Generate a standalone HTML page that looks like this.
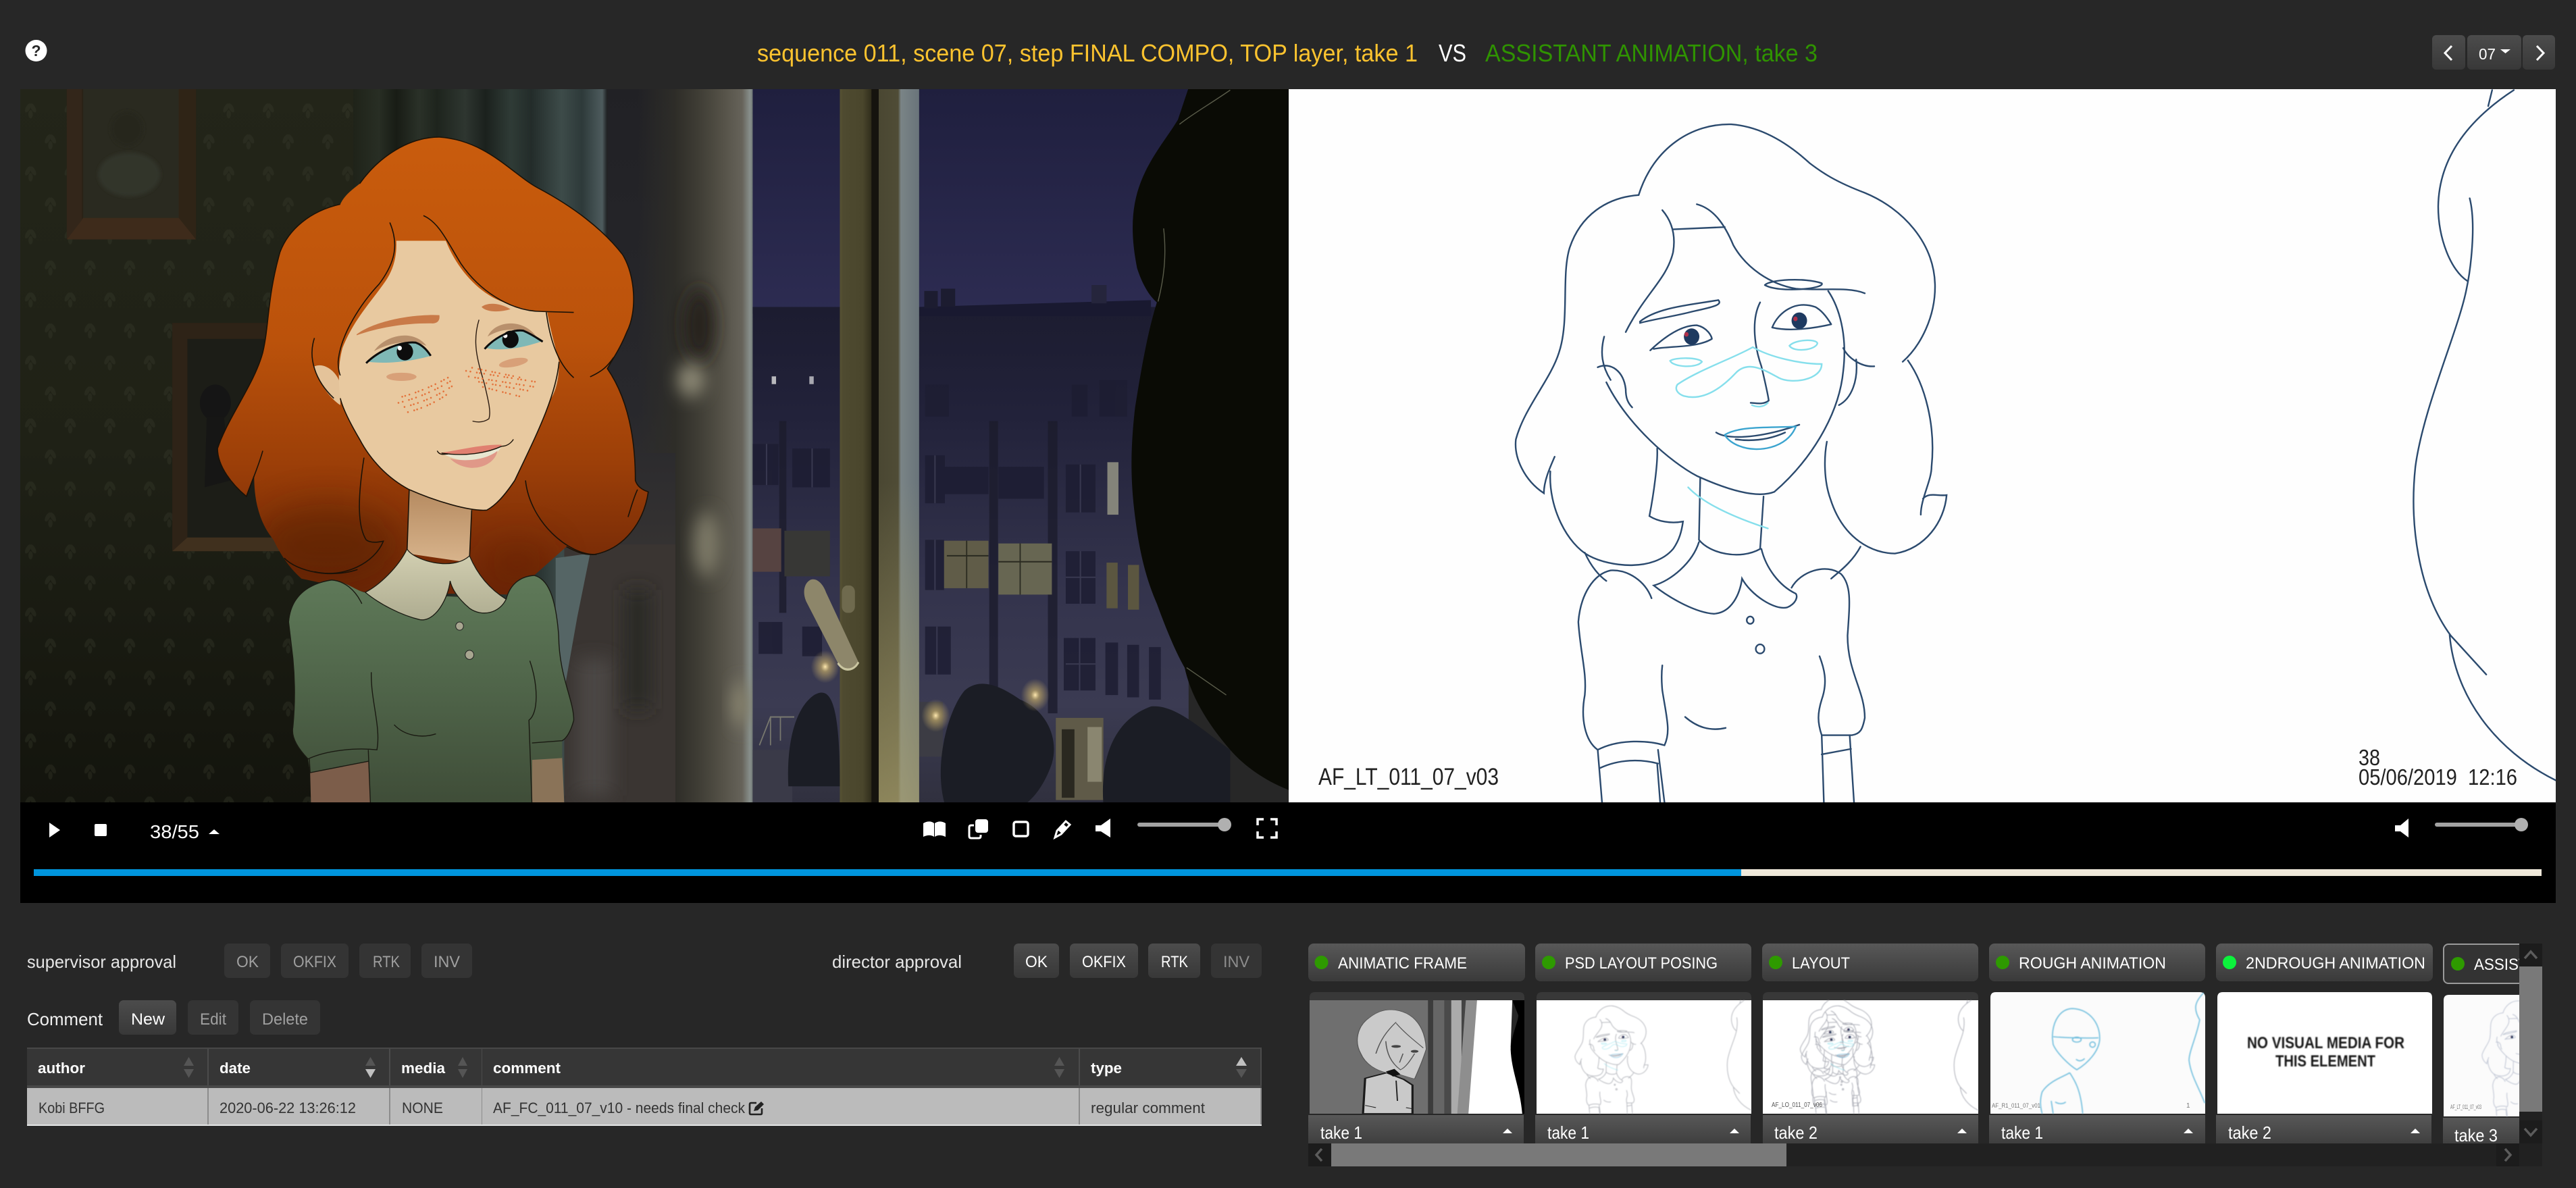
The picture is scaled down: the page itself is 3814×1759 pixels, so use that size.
<!DOCTYPE html>
<html lang="en">
<head>
<meta charset="utf-8">
<title>Compare takes</title>
<style>
html,body{margin:0;padding:0;background:#272727;width:3814px;height:1759px;overflow:hidden}
svg{display:block}
text{font-family:"Liberation Sans",Arial,sans-serif}
.n,.n *{vector-effect:non-scaling-stroke}
</style>
</head>
<body>
<svg xmlns="http://www.w3.org/2000/svg" width="3814" height="1759" viewBox="0 0 3814 1759">
<defs>
<linearGradient id="btn" x1="0" y1="0" x2="0" y2="1"><stop offset="0" stop-color="#4c4c4c"/><stop offset="1" stop-color="#383838"/></linearGradient>
<linearGradient id="tab" x1="0" y1="0" x2="0" y2="1"><stop offset="0" stop-color="#585858"/><stop offset="1" stop-color="#3a3a3a"/></linearGradient>
<linearGradient id="wall" x1="0" y1="0" x2="0" y2="1"><stop offset="0" stop-color="#232519"/><stop offset=".5" stop-color="#1f2116"/><stop offset="1" stop-color="#13140d"/></linearGradient>
<linearGradient id="curt" x1="0" y1="0" x2="1" y2="0">
<stop offset="0" stop-color="#1f2319"/><stop offset=".1" stop-color="#282e24"/><stop offset=".17" stop-color="#181c15"/><stop offset=".26" stop-color="#2a3128"/><stop offset=".33" stop-color="#1e241d"/><stop offset=".44" stop-color="#2e3630"/><stop offset=".52" stop-color="#1b211d"/><stop offset=".62" stop-color="#2f3b36"/><stop offset=".7" stop-color="#232c2a"/><stop offset=".82" stop-color="#3d4b49"/><stop offset=".9" stop-color="#2e3a3a"/><stop offset=".98" stop-color="#4d5b5d"/><stop offset="1" stop-color="#1d1e20"/></linearGradient>
<linearGradient id="curt2" x1="0" y1="0" x2="0" y2="1"><stop offset="0" stop-color="#212125"/><stop offset=".45" stop-color="#28282c"/><stop offset=".75" stop-color="#3c3835"/><stop offset="1" stop-color="#4a4541"/></linearGradient>
<linearGradient id="curt2b" x1="0" y1="0" x2="1" y2="0"><stop offset="0" stop-color="#2e2d28" stop-opacity="0"/><stop offset="1" stop-color="#2e2d28"/></linearGradient>
<linearGradient id="curt3" x1="0" y1="0" x2="1" y2="0"><stop offset="0" stop-color="#2e2d28"/><stop offset=".3" stop-color="#3f3d35"/><stop offset=".6" stop-color="#545147"/><stop offset=".86" stop-color="#66635a"/><stop offset=".96" stop-color="#88908c"/><stop offset="1" stop-color="#6e7674"/></linearGradient>
<linearGradient id="hair" x1="0" y1="108" x2="0" y2="1100" gradientUnits="userSpaceOnUse"><stop offset="0" stop-color="#c95c0d"/><stop offset=".45" stop-color="#bb520b"/><stop offset=".72" stop-color="#9c3f08"/><stop offset="1" stop-color="#6e2606"/></linearGradient>
<linearGradient id="dress" x1="0" y1="1070" x2="0" y2="1568" gradientUnits="userSpaceOnUse"><stop offset="0" stop-color="#5f7a59"/><stop offset=".5" stop-color="#4f6449"/><stop offset="1" stop-color="#3f4d38"/></linearGradient>
<linearGradient id="neck" x1="0" y1="880" x2="0" y2="1040" gradientUnits="userSpaceOnUse"><stop offset="0" stop-color="#b58a60"/><stop offset="1" stop-color="#d8b48c"/></linearGradient>
<linearGradient id="collar" x1="0" y1="1010" x2="0" y2="1165" gradientUnits="userSpaceOnUse"><stop offset="0" stop-color="#d3d0b2"/><stop offset="1" stop-color="#aeac90"/></linearGradient>
<linearGradient id="sky" x1="0" y1="0" x2="0" y2="1"><stop offset="0" stop-color="#1f1f3e"/><stop offset="1" stop-color="#2d2c52"/></linearGradient>
<linearGradient id="bld" x1="0" y1="0" x2="0" y2="1"><stop offset="0" stop-color="#1c1c30"/><stop offset=".22" stop-color="#22223a"/><stop offset=".55" stop-color="#33334c"/><stop offset=".8" stop-color="#3b3b52"/><stop offset="1" stop-color="#30303e"/></linearGradient>
<linearGradient id="fr1" x1="0" y1="0" x2="1" y2="0"><stop offset="0" stop-color="#575233"/><stop offset=".1" stop-color="#4e4a30"/><stop offset=".7" stop-color="#4a462c"/><stop offset=".95" stop-color="#33301d"/><stop offset="1" stop-color="#171510"/></linearGradient>
<linearGradient id="fr2" x1="0" y1="0" x2="1" y2="0"><stop offset="0" stop-color="#4a4732"/><stop offset=".48" stop-color="#4f4c36"/><stop offset=".55" stop-color="#7a8486"/><stop offset="1" stop-color="#69747a"/></linearGradient>
<linearGradient id="fr2b" x1="0" y1="0" x2="0" y2="1"><stop offset="0" stop-color="#000" stop-opacity="0"/><stop offset=".55" stop-color="#a89f6c" stop-opacity="0"/><stop offset="1" stop-color="#a89f6c" stop-opacity=".7"/></linearGradient>
<radialGradient id="lamp"><stop offset="0" stop-color="#ffe9b0"/><stop offset=".3" stop-color="#c0a868" stop-opacity=".7"/><stop offset="1" stop-color="#c0a868" stop-opacity="0"/></radialGradient>
<filter id="b4" x="-30%" y="-30%" width="160%" height="160%"><feGaussianBlur stdDeviation="4"/></filter>
<filter id="b20" x="-50%" y="-50%" width="200%" height="200%"><feGaussianBlur stdDeviation="20"/></filter>
<filter id="b40" x="-80%" y="-80%" width="260%" height="260%"><feGaussianBlur stdDeviation="40"/></filter>
<filter id="b1" x="-5%" y="-5%" width="110%" height="110%"><feGaussianBlur stdDeviation=".7"/></filter>
<pattern id="leaf" width="92" height="138" patternUnits="userSpaceOnUse" patternTransform="translate(45,20)">
<g fill="#3a3c2e" opacity=".32"><ellipse cx="20" cy="24" rx="5" ry="11" transform="rotate(30 20 24)"/><ellipse cx="32" cy="24" rx="5" ry="11" transform="rotate(-30 32 24)"/><ellipse cx="26" cy="38" rx="5" ry="9"/><ellipse cx="66" cy="92" rx="5" ry="11" transform="rotate(30 66 92)"/><ellipse cx="78" cy="92" rx="5" ry="11" transform="rotate(-30 78 92)"/><ellipse cx="72" cy="106" rx="5" ry="9"/></g>
</pattern>
<clipPath id="cL"><rect x="30" y="132" width="1878" height="1056"/></clipPath>
<clipPath id="cR"><rect x="1908" y="132" width="1876" height="1056"/></clipPath>
<clipPath id="cT"><rect x="1930" y="1380" width="1800" height="313"/></clipPath>
<clipPath id="cHead"><rect x="1908" y="0" width="1100" height="1300"/></clipPath>
<clipPath id="cHair"><path d="M1020 108C1130 115 1190 190 1250 220C1330 260 1400 310 1445 365C1475 410 1480 490 1455 535C1440 570 1425 590 1410 615C1450 670 1475 750 1475 860C1480 875 1495 882 1505 885C1495 950 1450 1010 1380 1022C1355 1024 1335 1015 1315 1005L1190 1110L850 1105L700 1075C670 1050 650 1020 635 990C600 950 590 900 590 850L572 895C540 870 505 830 505 790C530 720 590 650 610 580C625 520 620 460 650 360C670 310 720 270 790 255C800 235 815 225 835 210C880 150 950 108 1020 108Z"/></clipPath>

<g id="sk0" class="n" fill="none" stroke-linecap="round">
 <g transform="translate(1900,130) scale(.63776,.67602)">
  <path d="M825 235C860 130 950 78 1040 80C1110 85 1170 120 1222 165C1250 185 1280 205 1350 230C1440 265 1510 340 1513 430C1515 500 1480 565 1438 600"/>
  <path d="M1450 597C1490 650 1515 740 1505 830C1505 860 1480 900 1480 935M1485 900C1500 885 1520 895 1540 892C1535 950 1490 1010 1420 1020C1370 1020 1300 990 1270 900C1255 860 1255 810 1262 775"/>
  <path d="M825 235C750 240 690 280 665 350C645 410 665 510 640 580C620 640 560 700 540 770C535 810 560 860 605 888C605 860 620 830 630 808"/>
  <path d="M620 840C615 920 660 1000 710 1025C760 1050 860 1060 905 1010C920 990 925 970 928 950C900 955 870 950 850 938C860 890 870 820 868 790"/>
  <path d="M880 268C900 290 912 320 905 360C890 420 840 450 795 535M905 310L1025 305M960 255C1000 265 1025 300 1045 345C1075 395 1130 430 1190 440C1250 445 1310 435 1350 450"/>
  <path d="M1118 432C1130 420 1210 415 1250 428C1260 440 1150 450 1118 432"/>
  <path d="M1265 445C1290 480 1310 540 1300 620C1290 720 1220 820 1140 885C1100 900 1030 880 960 850C900 820 800 740 750 645"/>
  <path d="M730 612C760 600 790 620 795 660C795 680 800 690 810 700M745 545C735 580 740 610 760 640M1330 595C1335 640 1320 680 1290 695M1300 570C1310 590 1340 612 1372 610"/>
  <path d="M828 512C870 480 950 475 1010 465C1020 475 1000 480 950 490C910 500 870 505 828 515"/>
  <path d="M852 575C880 550 920 520 960 520C985 525 995 545 995 550M860 572C900 565 960 570 995 550"/>
  <circle cx="948" cy="545" r="18" fill="#1e3a60" stroke="none"/><circle cx="936" cy="540" r="5" fill="#b0304a" stroke="none"/>
  <path d="M1135 525C1150 490 1190 465 1235 480C1255 490 1270 515 1272 518M1135 525C1180 535 1240 525 1272 518"/>
  <circle cx="1198" cy="510" r="18" fill="#1e3a60" stroke="none"/><circle cx="1189" cy="506" r="5" fill="#b0304a" stroke="none"/>
  <path d="M1107 470C1085 510 1095 570 1110 610C1120 650 1125 670 1127 685C1115 695 1095 690 1085 690"/>
  <path d="M1005 755C1030 770 1100 770 1198 738M1050 770C1090 775 1130 770 1165 755"/>
  <path d="M968 855L965 990M1115 895L1107 1010M965 990C990 1020 1060 1035 1107 1010"/>
  <path d="M965 995C950 1040 900 1080 860 1090C900 1120 960 1150 1000 1152C1040 1150 1060 1110 1065 1075C1085 1110 1140 1145 1170 1138C1190 1130 1195 1115 1190 1108C1150 1090 1120 1050 1110 1010"/>
  <path d="M855 1118C840 1080 800 1055 760 1057C720 1065 690 1110 685 1170C690 1240 705 1280 700 1330C690 1380 700 1430 730 1450C780 1425 850 1430 885 1440C900 1410 890 1380 880 1320C878 1300 878 1280 880 1265"/>
  <path d="M1180 1095C1200 1060 1260 1040 1295 1065C1320 1090 1315 1130 1310 1200C1310 1280 1350 1320 1350 1380C1345 1405 1340 1415 1320 1418L1250 1418C1240 1390 1240 1370 1250 1340C1265 1300 1255 1270 1245 1245"/>
  <path d="M730 1450L740 1565M735 1490C780 1470 830 1470 870 1480M870 1450L885 1565M868 1480L875 1565M1250 1418L1255 1565M1315 1418L1325 1565M1250 1460L1318 1448"/>
  <path d="M933 1378C960 1400 990 1410 1027 1402"/>
  <circle cx="1084" cy="1166" r="8"/><circle cx="1107" cy="1229" r="10"/>
  <path d="M700 1018C715 1050 735 1070 750 1080M1340 1005C1320 1040 1290 1060 1272 1075"/>
 </g>
 <g transform="translate(2900,130) scale(.58291,.67602)">
  <path d="M1355 5L1345 40M1410 5C1330 50 1220 130 1218 260C1218 330 1250 400 1292 423M1298 242C1315 300 1300 400 1290 440C1270 530 1180 700 1160 830C1145 950 1165 1100 1250 1200L1340 1285M1247 1198C1260 1330 1360 1450 1517 1517"/>
 </g>
</g>
<g id="skb" class="n" fill="none" stroke-linecap="round" transform="translate(1900,130) scale(.63776,.67602)">
  <g stroke="#86dfec">
   <path d="M898 598C910 590 965 590 972 600C960 615 905 612 898 598M1175 565C1190 550 1240 550 1240 560C1235 575 1185 580 1175 565"/>
   <path d="M915 650C960 620 1050 590 1090 568C1130 590 1200 605 1250 605C1250 640 1180 650 1150 635C1120 620 1080 595 1050 625C1010 665 970 685 930 675C915 670 908 660 915 650"/>
   <path d="M1088 695C1100 700 1115 700 1125 690M940 875C980 915 1060 945 1125 965"/>
  </g>
  <g stroke="#3ba4cf"><path d="M1025 760C1060 740 1130 745 1190 742C1170 790 1100 800 1060 785C1045 780 1030 770 1025 760"/></g>
</g>
</defs>

<rect width="3814" height="1759" fill="#272727"/>

<!-- header -->
<circle cx="53.5" cy="75" r="16" fill="#fff"/>
<text x="53.5" y="83" font-size="23" font-weight="700" fill="#272727" text-anchor="middle">?</text>
<text x="1121" y="91" font-size="36" fill="#fcc32f" textLength="978" lengthAdjust="spacingAndGlyphs">sequence 011, scene 07, step FINAL COMPO, TOP layer, take 1</text>
<text x="2130" y="91" font-size="36" fill="#fff" textLength="41" lengthAdjust="spacingAndGlyphs">VS</text>
<text x="2199" y="91" font-size="36" fill="#2f9300" textLength="492" lengthAdjust="spacingAndGlyphs">ASSISTANT ANIMATION, take 3</text>
<rect x="3601" y="52" width="49" height="51" rx="6" fill="url(#btn)"/>
<rect x="3653" y="52" width="80" height="51" rx="6" fill="url(#btn)"/>
<rect x="3735" y="52" width="48" height="51" rx="6" fill="url(#btn)"/>
<path d="M3630 68L3620 78.5L3630 89" fill="none" stroke="#fff" stroke-width="3"/>
<path d="M3756 68L3766 78.5L3756 89" fill="none" stroke="#fff" stroke-width="3"/>
<text x="3670" y="88" font-size="23" fill="#fff" textLength="25" lengthAdjust="spacingAndGlyphs">07</text>
<path d="M3702 73H3717L3709.5 79Z" fill="#fff"/>

<!-- left video frame -->
<g clip-path="url(#cL)">
 <g transform="translate(0,130) scale(.63776,.67602)">
  <rect x="40" y="0" width="1540" height="1570" fill="url(#wall)"/>
  <rect x="40" y="0" width="800" height="1570" fill="url(#leaf)"/>
  <!-- frames -->
  <rect x="155" y="0" width="300" height="332" fill="#2a2216"/>
  <rect x="193" y="0" width="224" height="285" fill="#2a2a20"/>
  <path d="M155 332L193 285H417L455 332Z" fill="#3e2b1b"/>
  <path d="M155 0H190V290L155 332Z" fill="#33261a"/><path d="M415 0H455V332L415 285Z" fill="#2f2416"/>
  <ellipse cx="300" cy="190" rx="72" ry="48" fill="#33342a" filter="url(#b4)"/><circle cx="295" cy="90" r="38" fill="#25271d" filter="url(#b4)"/>
  <rect x="400" y="515" width="260" height="500" fill="#2e2317"/>
  <rect x="435" y="550" width="225" height="435" fill="#1c1d17"/>
  <path d="M400 1015L435 985H660V1015Z" fill="#40301e"/>
  <ellipse cx="500" cy="690" rx="36" ry="40" fill="#151515"/><path d="M480 720H520L535 860L475 875Z" fill="#161615"/>
  <!-- curtain -->
  <rect x="820" y="0" width="590" height="1570" fill="url(#curt)"/>
  <rect x="1410" y="0" width="170" height="1570" fill="url(#curt2)"/>
  <rect x="1480" y="0" width="90" height="800" fill="url(#curt2b)"/>
  <rect x="1310" y="1000" width="270" height="570" fill="#3a3532"/>
  <rect x="1340" y="1250" width="80" height="300" fill="#4c4744" filter="url(#b20)"/>
  <rect x="1450" y="1100" width="60" height="260" fill="#2c2926" filter="url(#b20)"/>
  <path d="M1290 1030L1370 1020L1340 1160L1310 1320L1290 1300Z" fill="#556565"/>
  <!-- hair -->
  <path d="M1020 108C1130 115 1190 190 1250 220C1330 260 1400 310 1445 365C1475 410 1480 490 1455 535C1440 570 1425 590 1410 615C1450 670 1475 750 1475 860C1480 875 1495 882 1505 885C1495 950 1450 1010 1380 1022C1355 1024 1335 1015 1315 1005L1190 1110L850 1105L700 1075C670 1050 650 1020 635 990C600 950 590 900 590 850L572 895C540 870 505 830 505 790C530 720 590 650 610 580C625 520 620 460 650 360C670 310 720 270 790 255C800 235 815 225 835 210C880 150 950 108 1020 108Z" fill="url(#hair)"/>
  <g clip-path="url(#cHair)">
   <ellipse cx="760" cy="1000" rx="170" ry="90" fill="#4a1a04" opacity=".45" filter="url(#b40)"/>
   <ellipse cx="1200" cy="1040" rx="90" ry="50" fill="#5a1f04" opacity=".4" filter="url(#b40)"/>
  </g>
  <!-- ear -->
  <path d="M730 610C755 600 785 625 790 650L790 695C765 680 735 640 730 610Z" fill="#e4c39a"/>
  <path d="M1270 610L1298 600C1298 640 1290 670 1272 690Z" fill="#d8b48a"/>
  <!-- neck -->
  <path d="M950 870L1095 920L1090 1040L945 1020Z" fill="url(#neck)"/>
  <!-- face -->
  <path d="M920 335L1035 335C1060 395 1110 450 1170 470C1210 485 1245 490 1270 490C1280 540 1290 570 1298 600C1290 680 1240 770 1195 860C1170 895 1150 915 1130 925C1090 928 1010 905 950 880C900 855 860 815 835 770C810 730 795 700 790 680C785 640 785 605 795 570C820 510 860 470 890 430C910 405 922 375 920 335Z" fill="#e8c9a0"/>
  <g fill="none" stroke="#1a1208" stroke-width="1.6" class="n">
   <path d="M1020 108C1130 115 1190 190 1250 220C1330 260 1400 310 1445 365C1475 410 1480 490 1455 535C1440 570 1425 590 1410 615C1450 670 1475 750 1475 860C1480 875 1495 882 1505 885C1495 950 1450 1010 1380 1022C1355 1024 1335 1015 1315 1005"/>
   <path d="M835 210C880 150 950 108 1020 108M790 255C720 270 670 310 650 360C620 460 625 520 610 580C590 650 530 720 505 790C505 830 540 870 572 895L590 850M660 1030C690 1060 770 1075 830 1055"/>
   <path d="M905 295C925 340 920 380 880 430C840 470 790 540 785 600C785 620 790 630 790 630M983 280C1020 295 1040 340 1070 385C1110 440 1180 490 1260 490L1332 492M1268 490C1275 540 1290 600 1332 635M1370 633C1400 620 1410 610 1425 590M730 548C715 590 730 640 775 680M610 795C600 830 585 860 572 895M845 810C830 900 830 960 850 990C860 998 880 995 890 993C870 1040 800 1075 730 1060M1220 860C1230 950 1320 1025 1385 1022M1480 880C1470 900 1465 920 1458 940"/>
   <path d="M1298 600C1290 680 1240 770 1195 860C1170 895 1150 915 1130 925C1090 928 1010 905 950 880C900 855 860 815 835 770C810 730 795 700 790 680M950 880L945 1015M1095 925L1090 1030"/>
  </g>
  <!-- facial features -->
  <path d="M828 540C870 510 960 495 1020 498C1022 510 1015 516 1005 516C940 515 880 525 828 542Z" fill="#c97a48"/>
  <path d="M1118 480C1130 470 1160 470 1185 485C1160 492 1130 492 1118 480Z" fill="#c97a48"/>
  <path d="M868 577C895 540 960 528 990 565C950 550 905 558 868 577Z" fill="#b8906c"/>
  <path d="M1132 545C1150 508 1215 505 1245 545C1205 525 1165 525 1132 545Z" fill="#b8906c"/>
  <path d="M855 600C890 570 930 556 965 558C985 565 995 578 1000 587C960 598 900 606 855 600Z" fill="#7fb8b6"/>
  <path d="M1128 570C1150 545 1190 530 1215 532C1235 540 1250 550 1258 555C1220 568 1170 578 1128 570Z" fill="#7fb8b6"/>
  <circle cx="940" cy="578" r="19" fill="#0d0d0d"/><circle cx="928" cy="570" r="5" fill="#fff"/>
  <circle cx="1185" cy="551" r="19" fill="#0d0d0d"/><circle cx="1173" cy="543" r="5" fill="#fff"/>
  <g fill="none" stroke="#0d0d0d" class="n">
   <path d="M850 603C880 575 930 555 965 558C985 565 995 580 1000 587" stroke-width="3"/>
   <path d="M1125 572C1150 545 1190 528 1215 532C1235 540 1250 550 1260 556" stroke-width="3"/>
   <path d="M1112 508C1095 560 1110 600 1125 650C1135 690 1140 710 1135 725C1120 735 1105 732 1097 730" stroke-width="1.4" stroke="#2a1a10"/>
  </g>
  <ellipse cx="932" cy="633" rx="35" ry="9" fill="#d8a078"/>
  <ellipse cx="1192" cy="602" rx="34" ry="9" fill="#d8a078" transform="rotate(-10 1192 602)"/>
  <g fill="none" stroke="#e4733c" stroke-width="4" stroke-linecap="round" stroke-dasharray=".1 10 .1 15 .1 7">
   <path d="M925 690Q990 675 1050 640"/><path d="M935 700Q1000 685 1052 652" stroke-dashoffset="6"/><path d="M920 680Q985 665 1045 632" stroke-dashoffset="11"/><path d="M940 712Q995 700 1040 670" stroke-dashoffset="3"/>
   <path d="M1082 620L1250 645"/><path d="M1085 632L1240 655" stroke-dashoffset="7"/><path d="M1100 642L1235 665" stroke-dashoffset="13"/><path d="M1090 612L1210 635" stroke-dashoffset="4"/><path d="M1120 655L1215 678" stroke-dashoffset="9"/>
  </g>
  <path d="M1020 800C1060 795 1120 780 1165 782C1150 800 1100 802 1060 802Z" fill="#e08070"/>
  <path d="M1025 800C1080 808 1130 800 1165 785C1150 810 1120 820 1090 818C1060 815 1040 808 1025 800Z" fill="#e8e6d0"/>
  <path d="M1045 812C1080 820 1130 815 1155 795C1150 820 1120 835 1090 832C1070 830 1055 822 1045 812Z" fill="#e09888"/>
  <path d="M1015 795C1020 805 1030 803 1040 802M1165 785C1175 785 1185 780 1192 770M1025 800C1080 808 1130 800 1165 785" fill="none" stroke="#1a1208" stroke-width="1.4" class="n"/>
  <!-- arms -->
  <path d="M720 1500L855 1470L860 1570H722Z" fill="#7c5d4a"/>
  <path d="M1235 1470L1305 1465L1310 1570H1235Z" fill="#8a7358"/>
  <!-- dress -->
  <path d="M670 1170C675 1110 720 1085 770 1078C800 1080 825 1100 845 1105L1175 1120C1185 1085 1210 1070 1240 1068C1270 1075 1290 1110 1297 1200C1298 1290 1332 1340 1332 1385C1325 1410 1315 1425 1305 1430L1305 1468L1235 1472L1235 1570L860 1570L855 1475L720 1500L715 1470C695 1450 675 1425 680 1400C685 1350 685 1300 680 1250Z" fill="url(#dress)"/>
  <path d="M670 1170C675 1110 720 1085 770 1078C800 1080 825 1100 840 1130M1175 1120C1185 1085 1210 1070 1240 1068C1270 1075 1290 1110 1297 1200C1298 1290 1332 1340 1332 1385C1325 1410 1315 1425 1305 1430L1235 1435M862 1280C860 1340 885 1400 875 1450C830 1445 760 1450 715 1470C695 1450 675 1425 680 1400C685 1350 685 1300 680 1250L670 1170M915 1395C940 1420 980 1425 1012 1415M1230 1255C1250 1310 1250 1370 1228 1385L1235 1570M718 1470L720 1500L855 1475M855 1450L860 1570" fill="none" stroke="#1a1a12" stroke-width="1.4" class="n"/>
  <!-- collar -->
  <path d="M945 1010C960 1035 1050 1060 1090 1025C1110 1070 1140 1100 1175 1120C1160 1150 1120 1160 1090 1140C1065 1120 1050 1100 1045 1080C1040 1120 1010 1170 975 1165C930 1155 880 1130 848 1105C880 1090 925 1050 945 1010Z" fill="url(#collar)" stroke="#1a1a12" stroke-width="1.3" class="n"/>
  <circle cx="1067" cy="1179" r="9" fill="#a8a690" stroke="#222" stroke-width="1" class="n"/>
  <circle cx="1090" cy="1242" r="10" fill="#a8a690" stroke="#222" stroke-width="1" class="n"/>
 </g>

 <!-- window part -->
 <g transform="translate(1000,130) scale(.58673,.67602)">
  <rect x="0" y="0" width="196" height="1570" fill="url(#curt3)"/>
  <ellipse cx="60" cy="520" rx="40" ry="80" fill="#25231f" filter="url(#b20)"/>
  <ellipse cx="40" cy="640" rx="36" ry="36" fill="#8d8976" filter="url(#b20)"/>
  <ellipse cx="80" cy="1000" rx="34" ry="70" fill="#7c7866" filter="url(#b20)"/>
  <ellipse cx="165" cy="1350" rx="24" ry="50" fill="#86826d" filter="url(#b20)"/>
  <rect x="195" y="0" width="1100" height="495" fill="url(#sky)"/>
  <rect x="195" y="480" width="1100" height="1090" fill="url(#bld)"/>
  <path d="M615 480L1200 465V500H615Z" fill="#191930"/>
  <rect x="628" y="445" width="34" height="38" fill="#1c1c30"/><rect x="670" y="440" width="36" height="40" fill="#1c1c30"/><rect x="1050" y="432" width="38" height="40" fill="#25253c"/>
  <rect x="243" y="632" width="11" height="17" fill="#b8b8bc"/><rect x="338" y="632" width="11" height="17" fill="#a8a8b0"/>
  <g fill="#1d1d32" opacity=".85">
   <rect x="195" y="780" width="65" height="90"/><rect x="295" y="790" width="95" height="85"/>
   <rect x="630" y="805" width="50" height="105"/><rect x="680" y="830" width="110" height="60"/><rect x="815" y="830" width="115" height="70"/><rect x="985" y="825" width="75" height="105"/>
   <rect x="630" y="990" width="48" height="110"/><rect x="985" y="1015" width="75" height="115"/>
   <rect x="630" y="1180" width="65" height="105"/><rect x="980" y="1205" width="80" height="115"/><rect x="1085" y="1215" width="32" height="115"/><rect x="1140" y="1220" width="30" height="115"/><rect x="1195" y="1225" width="30" height="115"/>
   <rect x="210" y="1170" width="60" height="70"/><rect x="320" y="1180" width="50" height="65"/><rect x="1070" y="640" width="70" height="80"/>
   <rect x="630" y="650" width="60" height="70"/><rect x="1000" y="650" width="40" height="70"/>
  </g>
  <g stroke="#4a4a62" stroke-width="2" opacity=".6" fill="none" class="n">
   <path d="M1022 825V930M1022 1015V1130M660 1180V1285M1020 1205V1320M655 805V910M655 990V1100M230 780V870M345 790V875M985 1262H1060M985 1072H1060"/>
  </g>
  <rect x="792" y="730" width="22" height="610" fill="#1c1c2c" opacity=".8"/><rect x="940" y="730" width="24" height="640" fill="#1c1c2c" opacity=".8"/>
  <rect x="262" y="730" width="18" height="420" fill="#1c1c2c" opacity=".8"/>
  <rect x="195" y="965" width="72" height="95" fill="#564341"/><rect x="275" y="970" width="115" height="100" fill="#373735"/>
  <rect x="678" y="992" width="112" height="104" fill="#605c48"/><rect x="815" y="998" width="135" height="112" fill="#676652"/>
  <path d="M735 992V1096M685 1025H790M870 998V1110M815 1038H950" stroke="#2a2a20" stroke-width="3"/>
  <rect x="1090" y="820" width="28" height="115" fill="#84847a"/>
  <rect x="1088" y="1040" width="28" height="100" fill="#5b5640"/><rect x="1142" y="1045" width="28" height="98" fill="#5b5640"/>
  <rect x="960" y="1380" width="120" height="180" fill="#5f5a48"/>
  <rect x="975" y="1405" width="32" height="150" fill="#2a2820"/><rect x="1040" y="1400" width="36" height="120" fill="#8a8670"/>
  <rect x="615" y="1345" width="60" height="120" fill="#3c3c44"/>
  <rect x="195" y="1450" width="100" height="120" fill="#3a3a48"/>
  <g fill="#1b1d25">
   <path d="M285 1530C280 1440 300 1360 350 1330C390 1310 415 1340 415 1530Z"/>
   <path d="M680 1570C650 1480 690 1360 730 1320C770 1290 820 1310 870 1340C930 1360 970 1420 950 1480C930 1530 900 1560 880 1570Z"/>
   <path d="M1080 1570C1070 1450 1120 1380 1200 1355C1260 1350 1320 1400 1400 1450L1400 1570Z"/>
  </g>
  <circle cx="378" cy="1268" r="36" fill="url(#lamp)"/><circle cx="908" cy="1330" r="36" fill="url(#lamp)"/><circle cx="657" cy="1375" r="36" fill="url(#lamp)"/>
  <path d="M212 1440L240 1378H300M240 1378V1440M265 1378V1430" fill="none" stroke="#77776e" stroke-width="3"/>
  <!-- window frame -->
  <rect x="415" y="0" width="82" height="1570" fill="url(#fr1)"/>
  <rect x="495" y="0" width="18" height="1570" fill="#15130e"/>
  <rect x="513" y="0" width="102" height="1570" fill="url(#fr2)"/>
  <rect x="513" y="0" width="102" height="1570" fill="url(#fr2b)"/>
  <rect x="420" y="1090" width="33" height="60" rx="14" fill="#6f6a4e"/>
  <path d="M340 1078C325 1085 320 1105 330 1125L410 1260C425 1280 450 1278 462 1258L380 1105C372 1085 355 1072 340 1078Z" fill="#8d866a"/>
  <path d="M410 1260C425 1280 450 1278 462 1258" fill="none" stroke="#c9c5a0" stroke-width="5"/>
  <!-- dark silhouette -->
  <path d="M1295 0L1268 70C1240 110 1200 150 1175 205C1150 260 1148 320 1165 395C1178 430 1195 455 1215 470C1190 540 1175 620 1160 700C1148 790 1148 860 1160 940C1170 1010 1185 1070 1215 1130C1240 1190 1265 1240 1285 1270C1300 1330 1340 1390 1400 1450C1440 1490 1500 1525 1570 1545V0Z" fill="#0a0b05"/>
  <path d="M1400 5C1350 35 1300 60 1272 80M1232 308C1240 370 1232 420 1218 468M1290 1270L1390 1330" fill="none" stroke="#5a5c4a" stroke-width="1.4" class="n"/>
 </g>
</g>

<!-- right video frame -->
<rect x="1908" y="132" width="1876" height="1056" fill="#fefefe"/>
<g clip-path="url(#cR)"><g stroke="#2b4a6e" stroke-width="2.4"><use href="#sk0"/><use href="#skb"/></g></g>
<text x="1952" y="1162" font-size="35" fill="#222" textLength="267" lengthAdjust="spacingAndGlyphs">AF_LT_011_07_v03</text>
<text x="3492" y="1133" font-size="33" fill="#222" textLength="32" lengthAdjust="spacingAndGlyphs">38</text>
<text x="3492" y="1162" font-size="33" fill="#222" textLength="235" lengthAdjust="spacingAndGlyphs" xml:space="preserve">05/06/2019  12:16</text>

<!-- player bar -->
<rect x="30" y="1188" width="3754" height="149" fill="#000"/>
<path d="M73 1218L89 1229L73 1240Z" fill="#fff"/>
<rect x="140" y="1220" width="18" height="18" rx="2" fill="#fff"/>
<text x="222" y="1241" font-size="28" fill="#fff" textLength="73" lengthAdjust="spacingAndGlyphs">38/55</text>
<path d="M309 1235L317 1228L325 1235Z" fill="#fff"/>
<path d="M1367 1219C1373 1215 1380 1216 1383 1219V1239C1379 1236 1373 1236 1367 1239ZM1384 1219C1388 1216 1394 1215 1400 1219V1239C1394 1236 1388 1236 1384 1239Z" fill="#fff"/>
<rect x="1444" y="1213" width="19" height="20" rx="4" fill="#fff"/>
<path d="M1442 1222H1438Q1435 1222 1435 1225V1238Q1435 1241 1438 1241H1449Q1452 1241 1452 1238V1236" fill="none" stroke="#fff" stroke-width="3"/>
<rect x="1501" y="1217" width="21" height="21" rx="3" fill="none" stroke="#fff" stroke-width="3.5"/>
<path d="M1562 1240L1565 1230L1578 1216L1584 1221L1571 1235Z" fill="none" stroke="#fff" stroke-width="3"/><path d="M1574 1220L1580 1225L1572 1234L1566 1229Z" fill="#fff"/>
<path d="M1622 1222H1630L1644 1212V1240L1630 1231H1622Z" fill="#fff"/>
<rect x="1684" y="1218" width="134" height="6" rx="3" fill="#a2a2a2"/><circle cx="1813" cy="1221" r="10" fill="#b0b0b0"/>
<path d="M1862 1222V1213H1871M1881 1213H1890V1222M1890 1231V1240H1881M1871 1240H1862V1231" fill="none" stroke="#fff" stroke-width="3.5"/>
<path d="M3546 1222H3554L3566 1212V1240L3554 1231H3546Z" fill="#fff"/>
<rect x="3605" y="1218" width="130" height="6" rx="3" fill="#a2a2a2"/><circle cx="3733" cy="1221" r="10" fill="#b0b0b0"/>
<rect x="50" y="1287" width="2528" height="10" fill="#0095dd"/>
<rect x="2578" y="1287" width="1185" height="10" fill="#efe8da"/>

<!-- approval rows -->
<text x="40" y="1433" font-size="26" fill="#e6e6e6" textLength="221" lengthAdjust="spacingAndGlyphs">supervisor approval</text>
<g fill="#343434">
<rect x="332" y="1397" width="68" height="51" rx="7"/><rect x="416" y="1397" width="100" height="51" rx="7"/><rect x="532" y="1397" width="76" height="51" rx="7"/><rect x="624" y="1397" width="75" height="51" rx="7"/>
<rect x="1793" y="1397" width="75" height="51" rx="7"/><rect x="278" y="1481" width="75" height="51" rx="7"/><rect x="370" y="1481" width="104" height="51" rx="7"/>
</g>
<g font-size="24" fill="#a0a0a0">
<text x="350" y="1432" textLength="33" lengthAdjust="spacingAndGlyphs">OK</text>
<text x="434" y="1432" textLength="64" lengthAdjust="spacingAndGlyphs">OKFIX</text>
<text x="552" y="1432" textLength="40" lengthAdjust="spacingAndGlyphs">RTK</text>
<text x="642" y="1432" textLength="39" lengthAdjust="spacingAndGlyphs">INV</text>
<text x="1811" y="1432" fill="#8c8c8c" textLength="39" lengthAdjust="spacingAndGlyphs">INV</text>
<text x="296" y="1517" textLength="39" lengthAdjust="spacingAndGlyphs">Edit</text>
<text x="388" y="1517" textLength="68" lengthAdjust="spacingAndGlyphs">Delete</text>
</g>
<text x="1232" y="1433" font-size="26" fill="#e6e6e6" textLength="192" lengthAdjust="spacingAndGlyphs">director approval</text>
<g fill="url(#btn)">
<rect x="1501" y="1397" width="67" height="51" rx="7"/><rect x="1584" y="1397" width="101" height="51" rx="7"/><rect x="1700" y="1397" width="77" height="51" rx="7"/><rect x="176" y="1481" width="85" height="51" rx="7"/>
</g>
<g font-size="24" fill="#fff">
<text x="1518" y="1432" textLength="33" lengthAdjust="spacingAndGlyphs">OK</text>
<text x="1602" y="1432" textLength="65" lengthAdjust="spacingAndGlyphs">OKFIX</text>
<text x="1719" y="1432" textLength="40" lengthAdjust="spacingAndGlyphs">RTK</text>
<text x="194" y="1517" textLength="50" lengthAdjust="spacingAndGlyphs">New</text>
</g>
<text x="40" y="1518" font-size="26" fill="#f0f0f0" textLength="112" lengthAdjust="spacingAndGlyphs">Comment</text>

<!-- table -->
<rect x="40" y="1551" width="1828" height="60" fill="#363636"/>
<rect x="40" y="1551" width="1828" height="2" fill="#484848"/>
<rect x="40" y="1607" width="1828" height="4" fill="#484848"/>
<rect x="40" y="1611" width="1828" height="54" fill="#bbb"/>
<rect x="40" y="1665" width="1828" height="2" fill="#e4e6e6"/>
<g fill="#4b4b4b"><rect x="307" y="1553" width="2" height="54"/><rect x="576" y="1553" width="2" height="54"/><rect x="713" y="1553" width="1" height="54"/><rect x="1597" y="1553" width="2" height="54"/><rect x="1866" y="1553" width="2" height="54"/></g>
<g fill="#8c8c8c"><rect x="307" y="1611" width="2" height="54"/><rect x="576" y="1611" width="2" height="54"/><rect x="713" y="1611" width="1" height="54"/><rect x="1597" y="1611" width="2" height="54"/><rect x="1866" y="1611" width="2" height="54"/></g>
<g font-size="22" font-weight="700" fill="#fff">
<text x="56" y="1589" textLength="70" lengthAdjust="spacingAndGlyphs">author</text>
<text x="325" y="1589" textLength="46" lengthAdjust="spacingAndGlyphs">date</text>
<text x="594" y="1589" textLength="65" lengthAdjust="spacingAndGlyphs">media</text>
<text x="730" y="1589" textLength="100" lengthAdjust="spacingAndGlyphs">comment</text>
<text x="1615" y="1589" textLength="46" lengthAdjust="spacingAndGlyphs">type</text>
</g>
<g font-size="22" fill="#333">
<text x="57" y="1648" textLength="98" lengthAdjust="spacingAndGlyphs">Kobi BFFG</text>
<text x="325" y="1648" textLength="202" lengthAdjust="spacingAndGlyphs">2020-06-22 13:26:12</text>
<text x="595" y="1648" textLength="61" lengthAdjust="spacingAndGlyphs">NONE</text>
<text x="730" y="1648" textLength="373" lengthAdjust="spacingAndGlyphs">AF_FC_011_07_v10 - needs final check</text>
<text x="1615" y="1648" textLength="169" lengthAdjust="spacingAndGlyphs">regular comment</text>
</g>
<path d="M1120 1633H1112Q1110 1633 1110 1635V1648Q1110 1650 1112 1650H1126Q1128 1650 1128 1648V1641" fill="none" stroke="#222" stroke-width="2.6"/>
<path d="M1116 1645L1118 1639L1127 1631L1131 1635L1122 1644Z" fill="#222"/>
<g fill="#555">
<path d="M272 1578L279.5 1565L287 1578Z"/><path d="M272 1583L279.5 1596L287 1583Z"/>
<path d="M541 1578L548.5 1565L556 1578Z"/>
<path d="M678 1578L685 1565L692 1578Z"/><path d="M678 1583L685 1596L692 1583Z"/>
<path d="M1561 1578L1568.5 1565L1576 1578Z"/><path d="M1561 1583L1568.5 1596L1576 1583Z"/>
<path d="M1830 1583L1838 1596L1846 1583Z"/>
</g>
<path d="M541 1583L548.5 1596L556 1583Z" fill="#c0c0c0"/><path d="M1830 1578L1838 1565L1846 1578Z" fill="#c0c0c0"/>

<!-- element panel -->
<g clip-path="url(#cT)">
 <g fill="url(#tab)">
  <rect x="1937" y="1397" width="321" height="56" rx="8"/><rect x="2273" y="1397" width="320" height="56" rx="8"/><rect x="2609" y="1397" width="320" height="56" rx="8"/><rect x="2945" y="1397" width="320" height="56" rx="8"/><rect x="3281" y="1397" width="321" height="56" rx="8"/>
 </g>
 <rect x="3618" y="1398" width="160" height="58" rx="7" fill="#333" stroke="#9a9a9a" stroke-width="2"/>
 <g fill="#2e9a00"><circle cx="1956.5" cy="1425" r="10"/><circle cx="2293" cy="1425" r="10"/><circle cx="2629" cy="1425" r="10"/><circle cx="2965" cy="1425" r="10"/><circle cx="3639" cy="1427" r="10"/></g>
 <circle cx="3301" cy="1425" r="10" fill="#0cf23c"/>
 <g font-size="24" fill="#fff">
  <text x="1981" y="1434" textLength="191" lengthAdjust="spacingAndGlyphs">ANIMATIC FRAME</text>
  <text x="2317" y="1434" textLength="226" lengthAdjust="spacingAndGlyphs">PSD LAYOUT POSING</text>
  <text x="2653" y="1434" textLength="86" lengthAdjust="spacingAndGlyphs">LAYOUT</text>
  <text x="2989" y="1434" textLength="218" lengthAdjust="spacingAndGlyphs">ROUGH ANIMATION</text>
  <text x="3325" y="1434" textLength="266" lengthAdjust="spacingAndGlyphs">2NDROUGH ANIMATION</text>
  <text x="3663" y="1436" textLength="250" lengthAdjust="spacingAndGlyphs">ASSISTANT ANIMATION</text>
 </g>

 <!-- thumb headers -->
 <g fill="#383838"><path d="M1939 1481V1477Q1939 1469 1947 1469H2249Q2257 1469 2257 1477V1481Z"/><path d="M2275 1481V1477Q2275 1469 2283 1469H2585Q2593 1469 2593 1477V1481Z"/><path d="M2610 1481V1477Q2610 1469 2618 1469H2921Q2929 1469 2929 1477V1481Z"/></g>

 <!-- thumb 1 -->
 <svg x="1939" y="1481" width="318" height="168" viewBox="61 63 499 504" preserveAspectRatio="none">
  <rect x="61" y="63" width="280" height="504" fill="#6f6f6f"/>
  <rect x="336" y="63" width="12" height="504" fill="#3c3c3c"/><rect x="348" y="63" width="26" height="504" fill="#666"/><rect x="374" y="63" width="16" height="504" fill="#4a4a4a"/><rect x="390" y="63" width="24" height="504" fill="#ababab"/><rect x="414" y="63" width="10" height="504" fill="#444"/>
  <path d="M424 63H452L432 567H404Z" fill="#8e8e8e"/>
  <path d="M450 63H532L528 270L558 567H430Z" fill="#fff"/>
  <path d="M532 63H560V567H555C550 450 530 380 528 280C530 220 545 160 546 130Z" fill="#000"/>
  <path d="M190 410L240 385L280 415L300 440L300 567H185Z" fill="#c9c9c9" stroke="#1a1a1a" stroke-width="5"/>
  <path d="M250 105C310 110 330 200 332 280C322 340 310 390 305 412C285 405 260 380 240 385C215 375 190 345 180 300C165 250 170 180 200 140C215 118 230 105 250 105Z" fill="#cacaca" stroke="#555" stroke-width="2"/>
  <path d="M262 160C240 200 225 240 215 300M262 165C285 215 310 250 325 275M238 245C240 300 250 340 272 372C285 360 295 330 305 300M278 300L270 340" fill="none" stroke="#555" stroke-width="2.5"/>
  <path d="M255 402L238 380L258 368L272 392Z" fill="#111"/>
  <ellipse cx="262" cy="268" rx="11" ry="6" fill="#444"/><ellipse cx="305" cy="290" rx="9" ry="6" fill="#444"/>
  <path d="M262 420L265 510M190 530L215 540M285 540L300 545" fill="none" stroke="#222" stroke-width="3"/>
 </svg>

 <!-- thumb 2 -->
 <rect x="2275" y="1481" width="318" height="168" fill="#fff"/>
 <g filter="url(#b1)">
 <svg x="2275" y="1481" width="318" height="168" viewBox="1908 132 1876 1056" preserveAspectRatio="none">
  <g stroke="#b4b6bc" stroke-width="1"><use href="#sk0"/><use href="#skb" opacity=".5"/></g>
 </svg>
 </g>

 <!-- thumb 3 -->
 <rect x="2610" y="1481" width="319" height="168" fill="#fff"/>
 <g filter="url(#b1)">
 <svg x="2610" y="1481" width="319" height="168" viewBox="1908 132 1876 1056" preserveAspectRatio="none">
  <g stroke="#a9abb4" stroke-width="1"><use href="#sk0"/><g clip-path="url(#cHead)"><use href="#sk0" transform="translate(-10,-70)"/></g><use href="#skb" opacity=".6"/></g>
 </svg>
 </g>
 <text x="2623" y="1639" font-size="10" fill="#555" textLength="75" lengthAdjust="spacingAndGlyphs">AF_LO_011_07_v06</text>

 <!-- thumb 4 -->
 <path d="M2947 1649V1477Q2947 1469 2955 1469H3257Q3265 1469 3265 1477V1649Z" fill="#fbfbfb"/>
 <g filter="url(#b1)">
 <g transform="translate(2900,1460) scale(.5830,.3333)" fill="none" stroke="#6cbcdc" stroke-width="1.6" class="n">
  <path d="M238 230C238 150 260 100 290 100C335 105 360 170 358 240C355 290 330 340 300 372C280 350 250 300 240 260ZM282 385C270 400 230 420 212 470C205 510 208 540 212 567M282 385C295 420 310 460 315 567M240 225C270 230 320 232 355 230"/>
  <path d="M622 30C600 70 595 100 612 150C605 220 585 290 585 330C590 400 610 450 625 520"/>
  <ellipse cx="300" cy="238" rx="11" ry="11"/><ellipse cx="340" cy="260" rx="7" ry="12"/><path d="M298 325C305 335 312 335 320 322M235 510L240 567M245 515C255 525 265 525 272 515"/>
 </g>
 </g>
 <text x="2949" y="1640" font-size="9" fill="#777" textLength="72" lengthAdjust="spacingAndGlyphs">AF_R1_011_07_v01</text>
 <text x="3237" y="1640" font-size="10" fill="#777">1</text>

 <!-- thumb 5 -->
 <path d="M3283 1649V1477Q3283 1469 3291 1469H3593Q3601 1469 3601 1477V1649Z" fill="#fff"/>
 <text x="3327" y="1552" font-size="24" font-weight="700" fill="#151515" textLength="233" lengthAdjust="spacingAndGlyphs" filter="url(#b1)">NO VISUAL MEDIA FOR</text>
 <text x="3369" y="1579" font-size="24" font-weight="700" fill="#151515" textLength="148" lengthAdjust="spacingAndGlyphs" filter="url(#b1)">THIS ELEMENT</text>

 <!-- thumb 6 -->
 <path d="M3618 1653V1481Q3618 1473 3626 1473H3780V1653Z" fill="#fbfbfb"/>
 <g filter="url(#b1)">
 <svg x="3618" y="1473" width="318" height="180" viewBox="1908 132 1876 1056" preserveAspectRatio="none">
  <g stroke="#c0c6d4" stroke-width="1.1"><use href="#sk0"/></g>
 </svg>
 </g>
 <text x="3628" y="1642" font-size="9" fill="#777" textLength="46" lengthAdjust="spacingAndGlyphs">AF_LT_011_07_v03</text>

 <!-- take bars -->
 <g fill="url(#tab)">
  <rect x="1937" y="1651" width="319" height="50"/><rect x="2273" y="1651" width="319" height="50"/><rect x="2610" y="1651" width="319" height="50"/><rect x="2945" y="1651" width="320" height="50"/><rect x="3281" y="1651" width="319" height="50"/><rect x="3617" y="1655" width="160" height="50"/>
 </g>
 <g font-size="26" fill="#fff">
  <text x="1955" y="1686" textLength="62" lengthAdjust="spacingAndGlyphs">take 1</text>
  <text x="2291" y="1686" textLength="62" lengthAdjust="spacingAndGlyphs">take 1</text>
  <text x="2627" y="1686" textLength="64" lengthAdjust="spacingAndGlyphs">take 2</text>
  <text x="2963" y="1686" textLength="62" lengthAdjust="spacingAndGlyphs">take 1</text>
  <text x="3299" y="1686" textLength="64" lengthAdjust="spacingAndGlyphs">take 2</text>
  <text x="3634" y="1690" textLength="64" lengthAdjust="spacingAndGlyphs">take 3</text>
 </g>
 <g fill="#fff">
  <path d="M2225 1678L2232 1671L2239 1678Z"/><path d="M2561 1678L2568 1671L2575 1678Z"/><path d="M2898 1678L2905 1671L2912 1678Z"/><path d="M3233 1678L3240 1671L3247 1678Z"/><path d="M3569 1678L3576 1671L3583 1678Z"/>
 </g>
</g>

<!-- scrollbars -->
<rect x="1937" y="1693" width="1827" height="34" fill="#212121"/>
<rect x="1937" y="1693" width="34" height="34" fill="#1c1c1c"/>
<rect x="3696" y="1693" width="34" height="34" fill="#1c1c1c"/>
<rect x="1971" y="1693" width="674" height="34" fill="#797979"/>
<path d="M1957 1701L1949 1710L1957 1719" fill="none" stroke="#5c5c5c" stroke-width="3.5"/>
<path d="M3709 1701L3717 1710L3709 1719" fill="none" stroke="#5c5c5c" stroke-width="3.5"/>
<rect x="3730" y="1397" width="34" height="330" fill="#212121"/>
<rect x="3730" y="1397" width="34" height="34" fill="#1c1c1c"/>
<rect x="3730" y="1659" width="34" height="34" fill="#1c1c1c"/>
<rect x="3730" y="1431" width="34" height="215" fill="#797979"/>
<path d="M3738 1419L3747 1409L3756 1419" fill="none" stroke="#5c5c5c" stroke-width="3.5"/>
<path d="M3738 1671L3747 1681L3756 1671" fill="none" stroke="#5c5c5c" stroke-width="3.5"/>
</svg>
</body>
</html>
